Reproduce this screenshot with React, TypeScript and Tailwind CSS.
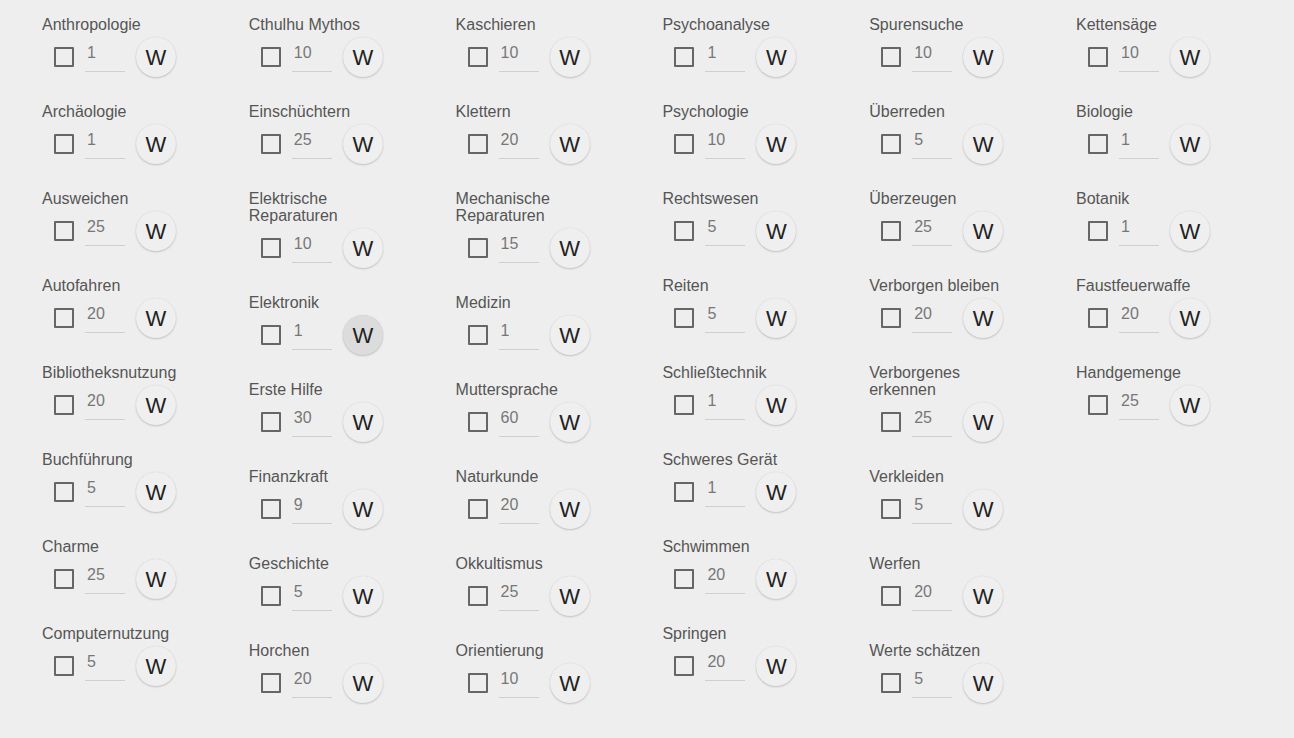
const columns: { label: string; value: number; hover?: boolean }[][] = [
  [
    { label: "Anthropologie", value: 1 },
    { label: "Archäologie", value: 1 },
    { label: "Ausweichen", value: 25 },
    { label: "Autofahren", value: 20 },
    { label: "Bibliotheksnutzung", value: 20 },
    { label: "Buchführung", value: 5 },
    { label: "Charme", value: 25 },
    { label: "Computernutzung", value: 5 },
  ],
  [
    { label: "Cthulhu Mythos", value: 10 },
    { label: "Einschüchtern", value: 25 },
    { label: "Elektrische Reparaturen", value: 10 },
    { label: "Elektronik", value: 1, hover: true },
    { label: "Erste Hilfe", value: 30 },
    { label: "Finanzkraft", value: 9 },
    { label: "Geschichte", value: 5 },
    { label: "Horchen", value: 20 },
  ],
  [
    { label: "Kaschieren", value: 10 },
    { label: "Klettern", value: 20 },
    { label: "Mechanische Reparaturen", value: 15 },
    { label: "Medizin", value: 1 },
    { label: "Muttersprache", value: 60 },
    { label: "Naturkunde", value: 20 },
    { label: "Okkultismus", value: 25 },
    { label: "Orientierung", value: 10 },
  ],
  [
    { label: "Psychoanalyse", value: 1 },
    { label: "Psychologie", value: 10 },
    { label: "Rechtswesen", value: 5 },
    { label: "Reiten", value: 5 },
    { label: "Schließtechnik", value: 1 },
    { label: "Schweres Gerät", value: 1 },
    { label: "Schwimmen", value: 20 },
    { label: "Springen", value: 20 },
  ],
  [
    { label: "Spurensuche", value: 10 },
    { label: "Überreden", value: 5 },
    { label: "Überzeugen", value: 25 },
    { label: "Verborgen bleiben", value: 20 },
    { label: "Verborgenes erkennen", value: 25 },
    { label: "Verkleiden", value: 5 },
    { label: "Werfen", value: 20 },
    { label: "Werte schätzen", value: 5 },
  ],
  [
    { label: "Kettensäge", value: 10 },
    { label: "Biologie", value: 1 },
    { label: "Botanik", value: 1 },
    { label: "Faustfeuerwaffe", value: 20 },
    { label: "Handgemenge", value: 25 },
  ],
]

function Skill({ label, value, hover }: { label: string; value: number; hover?: boolean }) {
  return (
    <div className="w-[136px] mb-[26px]">
      <div className="text-[16px] leading-[17px] text-[#555555]">{label}</div>
      <div className="flex items-center h-[40px] mt-[4px]">
        <div className="ml-[12px] w-[20px] h-[20px] border-[2px] border-[#666666] rounded-[1px]" />
        <div className="ml-[11px] w-[40px] h-[40px] flex flex-col">
          <div className="flex-1 pl-[2px] pt-[7px] text-[16px] leading-[18px] text-[#777777]">{value}</div>
          <div className="h-px bg-[#cfcfcf] mb-[5px]" />
        </div>
        <button
          className={
            "ml-[11px] w-[40px] h-[40px] rounded-full flex items-center justify-center text-[22px] text-[#222222] shadow-[0_1px_2px_rgba(0,0,0,0.18),0_0_1px_rgba(0,0,0,0.12)] " +
            (hover ? "bg-[#dcdcdc]" : "bg-[#efefef]")
          }
        >
          W
        </button>
      </div>
    </div>
  )
}

export default function App() {
  return (
    <div
      className="min-h-[738px] bg-[#eeeeee] pt-[16px] pl-[42px] flex"
      style={{ fontFamily: '"Liberation Sans", Arial, sans-serif' }}
    >
      {columns.map((col, i) => (
        <div key={i} className="w-[206.8px] shrink-0 flex flex-col">
          {col.map((s) => (
            <Skill key={s.label} {...s} />
          ))}
        </div>
      ))}
    </div>
  )
}
